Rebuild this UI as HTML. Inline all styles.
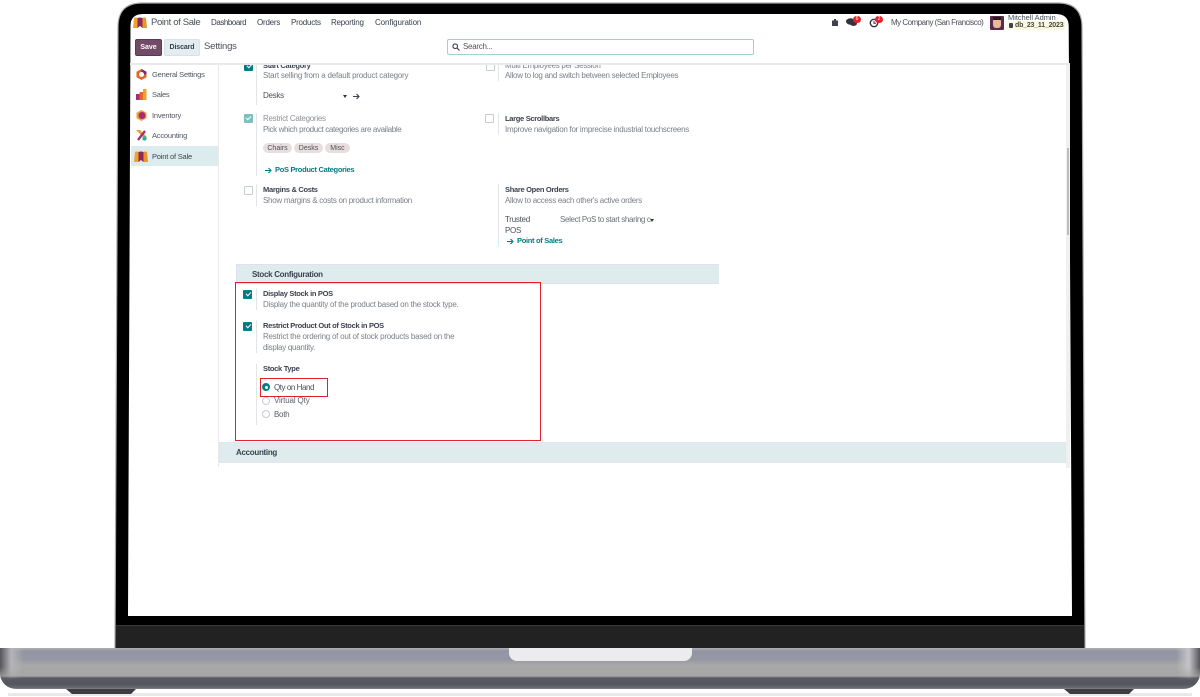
<!DOCTYPE html>
<html>
<head>
<meta charset="utf-8">
<style>
html,body{margin:0;padding:0;background:#fff}
#p{position:relative;width:1200px;height:697px;overflow:hidden;background:#fff;font-family:"Liberation Sans",sans-serif;color:#4a4f59}
#p div,#p svg{position:absolute}
.t{white-space:nowrap;font-size:8px;line-height:10px;color:#4f5562;letter-spacing:-.28px}
.g{color:#7a7f88}
.b{font-weight:bold;color:#3c4250;font-size:7.5px;letter-spacing:-.3px}
.n{font-size:8px;color:#374151;white-space:nowrap;line-height:10px;letter-spacing:-.22px}
.vl{width:1px;background:#e3e5e8}
.cb{width:7px;height:7px;border-radius:1px;background:#fff;border:1px solid #c9ccd1}
.ck{width:9px;height:9px;border-radius:1px;background:#017e84}
.ck:after{content:"";position:absolute;left:2.5px;top:2px;width:4px;height:2px;border-left:1.3px solid #fff;border-bottom:1.3px solid #fff;transform:rotate(-45deg)}
.pill{height:10px;line-height:11px;border-radius:5px;background:#e8dede;font-size:7px;text-align:center;color:#4a4f59}
.tl{color:#017e84;font-weight:bold;font-size:7.5px;line-height:10px;white-space:nowrap;letter-spacing:-.3px}
.rd{width:6px;height:6px;border-radius:50%;border:1px solid #c9ccd1;background:#fff}
</style>
</head>
<body>
<div id="p">
<!-- laptop lid -->
<svg style="left:0;top:0" width="1200" height="697" viewBox="0 0 1200 697">
  <path d="M115 649L118 27Q118 3 142 3H1058Q1082 3 1082 27L1085 649Z" fill="#000" stroke="#a8a8ae" stroke-width="1.200"/>
  <rect x="116" y="626" width="968" height="22" fill="#222"/>
  <rect x="116" y="625" width="968" height="1" fill="#383838"/>
  <path d="M128 616L130.500 26Q130.500 14 143 14H1056Q1068.500 14 1068.700 26L1072 616Z" fill="#fff"/>
</svg>

<!-- navbar -->
<svg style="left:133px;top:17px" width="14" height="11" viewBox="0 0 14 11"><path d="M0 11L1 1Q2.500 0 4.500 1L4.500 11z" fill="#f0a22c"/><path d="M4.500 11V1Q7 0 9.500 1V11L7 9z" fill="#8c2a5c"/><path d="M9.500 11V1Q11.500 0 13 1L14 11z" fill="#e8962c"/></svg>
<div class="t" style="left:151px;top:17px;font-size:9.500px;line-height:12px;color:#4a4f59;letter-spacing:-.35px">Point of Sale</div>
<div class="n" style="left:211px;top:18px;letter-spacing:-.45px">Dashboard</div>
<div class="n" style="left:257px;top:18px">Orders</div>
<div class="n" style="left:291px;top:18px">Products</div>
<div class="n" style="left:331px;top:18px">Reporting</div>
<div class="n" style="left:375px;top:18px;letter-spacing:-.1px">Configuration</div>

<svg style="left:832px;top:19px" width="6" height="7" viewBox="0 0 6 7"><path d="M2 0h2v1.500h2V7H0V1.500h2z" fill="#3c4250"/></svg>
<svg style="left:846px;top:18px" width="11" height="9" viewBox="0 0 11 9"><ellipse cx="4.500" cy="3.500" rx="4.500" ry="3.200" fill="#2f3542"/><ellipse cx="7.500" cy="5.500" rx="3.500" ry="2.500" fill="#2f3542"/></svg>
<div style="left:853px;top:16px;width:8px;height:7px;background:#e8202a;border-radius:4px;color:#fff;font-size:5px;line-height:7px;text-align:center">6</div>
<svg style="left:869px;top:18px" width="10" height="10" viewBox="0 0 10 10"><circle cx="5" cy="5" r="3.700" fill="none" stroke="#2f3542" stroke-width="1.400"/><path d="M5 3v2.300h2" fill="none" stroke="#2f3542"/></svg>
<div style="left:875px;top:16px;width:8px;height:7px;background:#e8202a;border-radius:4px;color:#fff;font-size:5px;line-height:7px;text-align:center">2</div>
<div class="n" style="left:891px;top:18px;color:#4a4f59;letter-spacing:-.52px">My Company (San Francisco)</div>
<div style="left:990px;top:16px;width:14px;height:14px;background:#5a2a4a;border-radius:1px"></div>
<div style="left:993px;top:18px;width:8px;height:10px;background:#e7b999;border-radius:3px"></div>
<div style="left:993px;top:17px;width:8px;height:3px;background:#2a1a1a"></div>
<div style="left:1006px;top:21px;width:59px;height:9px;background:#fbf8e3"></div>
<div class="t" style="left:1008px;top:13px;font-size:7.500px;color:#4a4f59;letter-spacing:-.05px">Mitchell Admin</div>
<div style="left:1009px;top:23px;width:4px;height:5px;background:#3c4250;border-radius:1px"></div>
<div class="t" style="left:1015px;top:21px;font-size:7px;font-weight:bold;color:#4a4a3a;letter-spacing:-.2px">db_23_11_2023</div>

<!-- control bar -->
<div style="left:135px;top:39px;width:27px;height:17px;background:#714b67;border:1px solid #5a3a52;box-sizing:border-box;border-radius:2px;color:#fff;font-size:7px;font-weight:bold;line-height:15px;text-align:center">Save</div>
<div style="left:164px;top:39px;width:36px;height:17px;background:#e3ecf0;border:1px solid #d8e2e8;box-sizing:border-box;border-radius:2px;color:#374151;font-size:7px;font-weight:bold;line-height:15px;text-align:center;letter-spacing:-.1px">Discard</div>
<div class="t" style="left:204px;top:41px;font-size:9.500px;line-height:12px;color:#4a4f59;letter-spacing:-.2px">Settings</div>
<div style="left:447px;top:39px;width:307px;height:16px;box-sizing:border-box;border:1px solid #9fd0d2;border-radius:2px;background:#fff"></div>
<svg style="left:452px;top:43px" width="8" height="8" viewBox="0 0 8 8"><circle cx="3.200" cy="3.200" r="2.300" fill="none" stroke="#3c4250" stroke-width="1.100"/><path d="M5 5l2.500 2.500" stroke="#3c4250" stroke-width="1.200"/></svg>
<div class="t" style="left:463px;top:42px;color:#555">Search...</div>
<div style="left:130px;top:63px;width:940px;height:2px;background:#e9eaec"></div>

<!-- sidebar -->
<div style="left:218px;top:65px;width:1px;height:402px;background:#e9e9ec"></div>
<div style="left:131px;top:146px;width:87px;height:20px;background:#dcecee"></div>
<svg style="left:136px;top:69px" width="11" height="11" viewBox="0 0 11 11"><path d="M5.500 0l5 2.700v5.600l-5 2.700-5-2.700V2.700z" fill="#e8632a"/><path d="M5.500 0l5 2.700v2.800H8A2.500 2.500 0 0 0 5.500 3z" fill="#7b2c6e"/><circle cx="5.500" cy="5.500" r="2.500" fill="#fff"/></svg>
<svg style="left:136px;top:89px" width="11" height="11" viewBox="0 0 11 11"><rect x="0" y="5" width="3.500" height="6" fill="#a62c78"/><rect x="3.500" y="3" width="3.500" height="8" fill="#e8632a"/><rect x="7" y="0" width="3.500" height="11" fill="#f0a22c"/></svg>
<svg style="left:136px;top:110px" width="11" height="11" viewBox="0 0 11 11"><path d="M5.500 0l5 2.700v5.600l-5 2.700-5-2.700V2.700z" fill="#f0a22c"/><circle cx="6" cy="5.500" r="3.500" fill="#a62c78"/></svg>
<svg style="left:136px;top:130px" width="11" height="11" viewBox="0 0 11 11"><path d="M0 0h4l7 7H7z" fill="#e8a22c"/><path d="M9 1L2 10" stroke="#a62c78" stroke-width="2.400"/><circle cx="8.500" cy="8.500" r="2.200" fill="#1fb5a6"/></svg>
<svg style="left:134px;top:151px" width="14" height="11" viewBox="0 0 14 11"><path d="M0 11L1 1Q2.500 0 4.500 1L4.500 11z" fill="#f0a22c"/><path d="M4.500 11V1Q7 0 9.500 1V11L7 9z" fill="#8c2a5c"/><path d="M9.500 11V1Q11.500 0 13 1L14 11z" fill="#e8962c"/></svg>
<div class="t" style="left:152px;top:70px;font-size:7.500px;letter-spacing:-.2px">General Settings</div>
<div class="t" style="left:152px;top:90px;font-size:7.500px">Sales</div>
<div class="t" style="left:152px;top:111px;font-size:7.500px;letter-spacing:-.2px">Inventory</div>
<div class="t" style="left:152px;top:131px;font-size:7.500px;letter-spacing:-.2px">Accounting</div>
<div class="t" style="left:152px;top:152px;font-size:7.500px;letter-spacing:-.2px;color:#3c4250">Point of Sale</div>

<!-- clipped top row -->
<div style="left:236px;top:65px;width:500px;height:27px;overflow:hidden">
  <div class="ck" style="left:8px;top:-3px"></div>
  <div class="t b" style="left:27px;top:-4px">Start Category</div>
  <div class="cb" style="left:250px;top:-3px"></div>
  <div class="vl" style="left:262px;top:0;height:16px"></div>
  <div class="t g" style="left:269px;top:-4px">Multi Employees per Session</div>
</div>
<div class="t" style="left:263px;top:71px;color:#7a7f88;letter-spacing:-.21px">Start selling from a default product category</div>
<div class="t g" style="left:505px;top:71px">Allow to log and switch between selected Employees</div>
<div class="t" style="left:263px;top:91px;color:#4a4f59">Desks</div>
<div style="left:343px;top:95px;width:0;height:0;border:2.500px solid transparent;border-top:3px solid #333"></div>
<svg style="left:353px;top:93px" width="7" height="7" viewBox="0 0 7 7"><path d="M0 3.500h6M3.500 1l2.500 2.500L3.500 6" fill="none" stroke="#374151" stroke-width="1.100"/></svg>
<div class="vl" style="left:256px;top:65px;height:40px"></div>

<!-- Restrict Categories -->
<div class="ck" style="left:243.500px;top:113.500px;background:#7fbec1"></div>
<div class="vl" style="left:256px;top:113px;height:63px"></div>
<div class="t" style="left:263px;top:114px;color:#8d9198">Restrict Categories</div>
<div class="t" style="left:263px;top:125px;color:#7a7f88;letter-spacing:-.35px">Pick which product categories are available</div>
<div class="pill" style="left:263px;top:143px;width:29px">Chairs</div>
<div class="pill" style="left:294px;top:143px;width:29px">Desks</div>
<div class="pill" style="left:325px;top:143px;width:25px">Misc</div>
<svg style="left:265px;top:167px" width="7" height="7" viewBox="0 0 7 7"><path d="M0 3.500h6M3.500 1l2.500 2.500L3.500 6" fill="none" stroke="#017e84" stroke-width="1.100"/></svg>
<div class="tl" style="left:275px;top:165px">PoS Product Categories</div>

<!-- Large Scrollbars -->
<div class="cb" style="left:485px;top:114px"></div>
<div class="vl" style="left:498px;top:113px;height:22px"></div>
<div class="t b" style="left:505px;top:114px">Large Scrollbars</div>
<div class="t g" style="left:505px;top:125px">Improve navigation for imprecise industrial touchscreens</div>

<!-- Margins -->
<div class="cb" style="left:244px;top:185.500px"></div>
<div class="vl" style="left:256px;top:184px;height:22px"></div>
<div class="t b" style="left:263px;top:185px">Margins &amp; Costs</div>
<div class="t g" style="left:263px;top:196px">Show margins &amp; costs on product information</div>

<!-- Share Open -->
<div class="vl" style="left:498px;top:184px;height:62px"></div>
<div class="t b" style="left:505px;top:185px">Share Open Orders</div>
<div class="t g" style="left:505px;top:196px">Allow to access each other's active orders</div>
<div class="t" style="left:505px;top:215px;color:#4a4f59">Trusted</div>
<div class="t" style="left:505px;top:226px;color:#4a4f59">POS</div>
<div class="t" style="left:560px;top:215px;color:#6a6f78;letter-spacing:-.36px">Select PoS to start sharing c</div>
<div style="left:650px;top:219px;width:0;height:0;border:2.500px solid transparent;border-top:3px solid #333"></div>
<svg style="left:507px;top:238px" width="7" height="7" viewBox="0 0 7 7"><path d="M0 3.500h6M3.500 1l2.500 2.500L3.500 6" fill="none" stroke="#017e84" stroke-width="1.100"/></svg>
<div class="tl" style="left:517px;top:236px">Point of Sales</div>

<!-- Stock Configuration -->
<div style="left:236px;top:264px;width:483px;height:20px;background:#dfecee;border:1px solid #e2e0ee;border-right:none;box-sizing:border-box"></div>
<div class="t b" style="left:252px;top:270px;font-size:8px">Stock Configuration</div>
<div style="left:235px;top:282px;width:306px;height:159px;box-sizing:border-box;border:1.500px solid #e0202a"></div>

<div class="ck" style="left:243px;top:290px"></div>
<div class="vl" style="left:256px;top:288px;height:22px"></div>
<div class="t b" style="left:263px;top:289px">Display Stock in POS</div>
<div class="t g" style="left:263px;top:300px;letter-spacing:-.24px">Display the quantity of the product based on the stock type.</div>

<div class="ck" style="left:243px;top:322px"></div>
<div class="vl" style="left:256px;top:320px;height:33px"></div>
<div class="t b" style="left:263px;top:321px">Restrict Product Out of Stock in POS</div>
<div class="t g" style="left:263px;top:332px;letter-spacing:-.24px">Restrict the ordering of out of stock products based on the</div>
<div class="t g" style="left:263px;top:343px">display quantity.</div>

<div class="vl" style="left:256px;top:364px;height:61px"></div>
<div class="t b" style="left:263px;top:364px">Stock Type</div>
<div style="left:260px;top:378px;width:68px;height:19px;box-sizing:border-box;border:1.500px solid #e0202a"></div>
<div class="rd" style="left:262px;top:383px;background:#017e84;border-color:#017e84"></div>
<div style="left:265px;top:386px;width:3px;height:3px;background:#fff;border-radius:50%"></div>
<div class="t" style="left:274px;top:383px;color:#4a4f59;letter-spacing:-.45px">Qty on Hand</div>
<div class="rd" style="left:262px;top:397px"></div>
<div class="t" style="left:274px;top:396px;color:#5a5f68;letter-spacing:-.15px">Virtual Qty</div>
<div class="rd" style="left:262px;top:410px"></div>
<div class="t" style="left:274px;top:410px;color:#5a5f68">Both</div>

<!-- scrollbar -->
<div style="left:1066px;top:65px;width:4px;height:403px;background:#f0f0f2"></div>
<div style="left:1067px;top:148px;width:2px;height:87px;background:#bdbdbd"></div>

<!-- Accounting -->
<div style="left:219px;top:442px;width:847px;height:21px;background:#dfecee;border:1px solid #e2e4ee;box-sizing:border-box"></div>
<div class="t b" style="left:236px;top:448px;font-size:8px">Accounting</div>

<!-- base -->
<div style="left:0;top:648px;width:1200px;height:41px;border-radius:0 0 16px 16px;background:linear-gradient(180deg,#b0b0b4 0,#9494a2 3px,#9696a4 11px,#a8a8a8 17px,#a6a6a8 28px,#5a5a62 30px,#55555d 36px,#6a6a72 40px,#8a8a92 41px)"></div>
<div style="left:0;top:648px;width:24px;height:32px;background:linear-gradient(90deg,#55555b 0,#b4b4b8 11px,rgba(130,130,138,0) 24px);-webkit-mask-image:linear-gradient(180deg,#000 60%,transparent)"></div>
<div style="left:1176px;top:648px;width:24px;height:32px;background:linear-gradient(90deg,rgba(130,130,138,0) 0,#c4c4c8 13px,#55555b 24px);-webkit-mask-image:linear-gradient(180deg,#000 60%,transparent)"></div>
<div style="left:509px;top:648px;width:183px;height:13px;background:#ececee;border-radius:0 0 8px 8px"></div>
<svg style="left:0;top:689px" width="1200" height="8" viewBox="0 0 1200 8">
  <rect x="8" y="4" width="1184" height="3" fill="#e9e9e9"/>
  <path d="M66 0H136L131 5H72Z" fill="#3d3d42"/>
  <path d="M1064 0H1134L1129 5H1070Z" fill="#3d3d42"/>
</svg>
</div>
</body>
</html>
